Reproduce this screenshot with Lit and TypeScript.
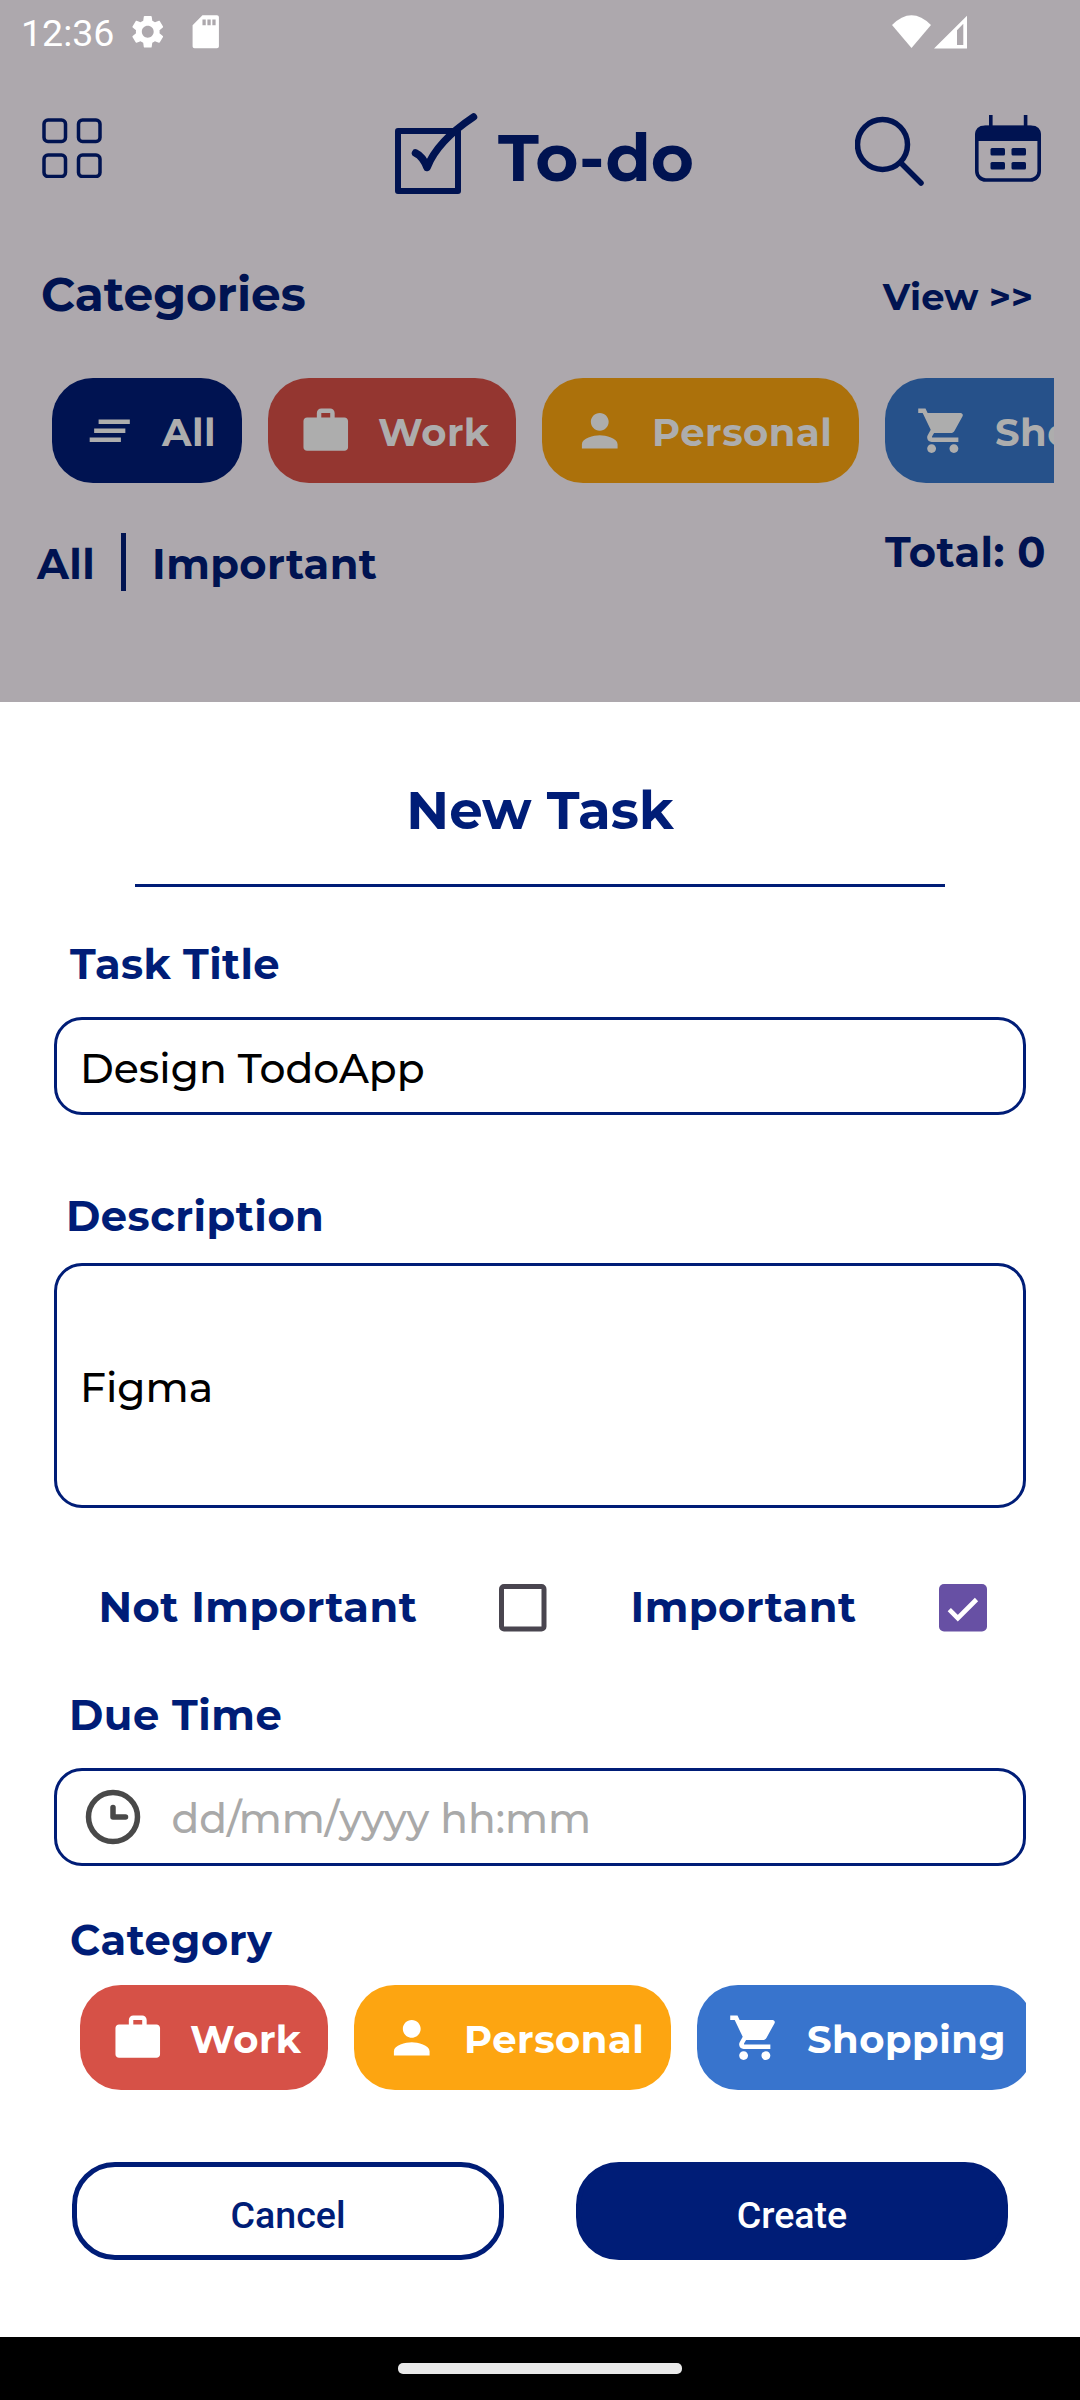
import { LitElement, html, css, svg, nothing } from "lit";
import { customElement, property, state } from "lit/decorators.js";
import { classMap } from "lit/directives/class-map.js";

type Category = "all" | "work" | "personal" | "shopping";

const NAMES: Record<Category, string> = {
  all: "All",
  work: "Work",
  personal: "Personal",
  shopping: "Shopping",
};

const GLYPHS: Record<Category, string> = {
  all: "M5 13h14v-2H5v2zm-2 4h14v-2H3v2zM7 7v2h14V7H7z",
  work: "M10 2h4c1.1 0 2 .9 2 2v2h4.4C21.300 6 22 6.700 22 7.600V19.400C22 20.300 21.300 21 20.400 21H3.600C2.700 21 2 20.300 2 19.400V7.600C2 6.700 2.700 6 3.600 6H8V4c0-1.100.9-2 2-2zm0 2v2h4V4z",
  personal:
    "M12 12c2.210 0 4-1.790 4-4s-1.790-4-4-4-4 1.790-4 4 1.790 4 4 4zm0 2c-2.670 0-8 1.340-8 4v2h16v-2c0-2.660-5.330-4-8-4z",
  shopping:
    "M7 18c-1.100 0-1.990.9-1.990 2S5.900 22 7 22s2-.9 2-2-.9-2-2-2zM1 2v2h2l3.600 7.590-1.350 2.450c-.160.280-.250.610-.250.960 0 1.100.9 2 2 2h12v-2H7.420c-.140 0-.250-.110-.250-.250l.030-.120.900-1.630h7.450c.750 0 1.410-.410 1.750-1.030l3.580-6.490c.080-.140.120-.310.120-.480 0-.550-.450-1-1-1H5.210l-.940-2H1zm16 16c-1.100 0-1.990.9-1.990 2s.890 2 1.990 2 2-.9 2-2-.9-2-2-2z",
};

@customElement("category-chip")
export class CategoryChip extends LitElement {
  @property() kind: Category = "all";
  @property({ type: Boolean }) dimmed = false;

  static styles = css`
    :host {
      display: block;
      flex: none;
    }
    .chip {
      display: flex;
      align-items: center;
      height: 105px;
      box-sizing: border-box;
      padding-left: 31px;
      border-radius: 41px;
      color: #fff;
      font: 700 38.5px/50px Montserrat, "Open Sans", sans-serif;
      letter-spacing: 0.5px;
      white-space: nowrap;
    }
    .glyph {
      width: 53.5px;
      height: 53.5px;
      flex: none;
      margin-right: 25.5px;
      fill: currentColor;
    }
    .name {
      padding-top: 4px;
    }
    .all {
      width: 190px;
      background: #001d77;
    }
    .work {
      width: 248px;
      background: #d65147;
    }
    .personal {
      width: 317px;
      background: #fda511;
    }
    .shopping {
      width: 336px;
      background: #3874cd;
    }
    .dimmed {
      color: #adadad;
    }
    .dimmed.all {
      background: #001351;
    }
    .dimmed.work {
      background: #943630;
    }
    .dimmed.personal {
      background: #ac710b;
    }
    .dimmed.shopping {
      background: #26518a;
    }
  `;

  render() {
    return html`
      <div class=${classMap({ chip: true, [this.kind]: true, dimmed: this.dimmed })}>
        <svg class="glyph" viewBox="0 0 24 24">
          <path fill-rule="evenodd" d=${GLYPHS[this.kind]}></path>
        </svg>
        <span class="name">${NAMES[this.kind]}</span>
      </div>
    `;
  }
}

@customElement("check-box")
export class CheckBox extends LitElement {
  @property({ type: Boolean }) checked = false;

  static styles = css`
    :host {
      display: block;
      flex: none;
    }
    .box {
      display: block;
      width: 48px;
      height: 48px;
    }
  `;

  render() {
    return html`
      <svg class="box" viewBox="0 0 48 48">
        ${this.checked
          ? svg`<rect x="0" y="0" width="48" height="47.5" rx="5" fill="#6750a4"></rect>
              <path d="M10.300 25.700L18.800 34.200L37.500 15.500" fill="none" stroke="#fff" stroke-width="4.6"></path>`
          : svg`<rect x="2.5" y="2.5" width="42.5" height="42.5" rx="2.5" fill="none" stroke="#49454f" stroke-width="5"></rect>`}
      </svg>
    `;
  }
}

@customElement("status-bar")
export class StatusBar extends LitElement {
  static styles = css`
    :host {
      display: flex;
      align-items: center;
      height: 63px;
      padding-left: 21px;
      color: #fff;
      font: 400 37.5px/44px Roboto, sans-serif;
    }
    svg {
      fill: currentColor;
      flex: none;
    }
    .time {
      width: 107px;
      padding-top: 3px;
    }
    .gear,
    .card {
      width: 39.5px;
      height: 39.5px;
    }
    .card {
      margin-left: 18.5px;
    }
    .signals {
      margin-left: auto;
      margin-right: 112px;
      width: 76px;
      height: 34px;
    }
  `;

  render() {
    return html`
      <span class="time">12:36</span>
      <svg class="gear" viewBox="0 0 24 24">
        <path
          d="M19.140 12.940c.040-.300.060-.610.060-.940 0-.320-.020-.640-.070-.940l2.030-1.580c.180-.140.230-.410.120-.610l-1.920-3.320c-.120-.220-.370-.290-.590-.220l-2.390.960c-.500-.380-1.030-.700-1.620-.940l-.360-2.540c-.040-.240-.240-.410-.480-.410h-3.840c-.240 0-.430.170-.470.410l-.360 2.540c-.590.240-1.130.570-1.620.940l-2.390-.960c-.220-.080-.470 0-.590.220L2.740 8.870c-.120.210-.080.470.120.610l2.030 1.580c-.050.300-.090.630-.090.940s.020.640.070.940l-2.030 1.580c-.180.140-.230.410-.120.610l1.920 3.320c.120.220.370.290.590.220l2.390-.960c.500.380 1.030.700 1.620.940l.360 2.540c.050.240.240.410.480.410h3.840c.240 0 .440-.170.470-.410l.360-2.540c.590-.240 1.130-.560 1.620-.940l2.390.960c.220.080.470 0 .590-.220l1.920-3.320c.120-.220.070-.470-.120-.610l-2.010-1.580zM12 15.600c-1.980 0-3.600-1.620-3.600-3.600s1.620-3.600 3.600-3.600 3.600 1.620 3.600 3.600-1.620 3.600-3.600 3.600z"
        ></path>
      </svg>
      <svg class="card" viewBox="0 0 24 24">
        <path
          fill-rule="evenodd"
          d="M18.800 2H10L4 8v12.800C4 21.500 4.500 22 5.200 22h13.600c.7 0 1.200-.5 1.200-1.200V3.200C20 2.500 19.500 2 18.800 2zM12 8h-2V4.500h2V8zm3 0h-2V4.500h2V8zm3 0h-2V4.500h2V8z"
        ></path>
      </svg>
      <svg class="signals" viewBox="0 0 76 34">
        <path d="M19.500 33L0 10Q19.500 -9.500 39 10Z"></path>
        <path fill-rule="evenodd" d="M42 33.500L75 .8V33.500ZM65 15.200V30H71.300V8.800Z"></path>
      </svg>
    `;
  }
}

@customElement("task-overview")
export class TaskOverview extends LitElement {
  static styles = css`
    :host {
      display: flex;
      flex-direction: column;
      height: 702px;
      overflow: hidden;
      background: #ada8ad;
      color: #001351;
      font: 700 41.6px/50px Montserrat, "Open Sans", sans-serif;
      white-space: nowrap;
    }
    svg {
      flex: none;
      fill: none;
      stroke: currentColor;
    }
    .header {
      display: flex;
      align-items: flex-start;
      height: 202px;
      padding: 50px 39px 0 42px;
      box-sizing: border-box;
    }
    .solid {
      fill: currentColor;
      stroke: none;
    }
    .grid {
      width: 60px;
      height: 60px;
      margin-top: 5px;
    }
    .logo {
      width: 83px;
      height: 83px;
      margin-left: 293px;
    }
    .title {
      margin: 12px auto 0 20px;
      font-size: 66px;
      line-height: 66px;
    }
    .search {
      width: 70px;
      height: 70px;
      margin-top: 3px;
    }
    .calendar {
      width: 66px;
      height: 68px;
      margin: 2px 0 0 50px;
    }
    .section {
      display: flex;
      justify-content: space-between;
      align-items: flex-start;
      height: 60px;
      padding: 0 47px 0 41px;
      line-height: 60px;
      font-size: 47px;
    }
    .view {
      padding-top: 2px;
      font-size: 36.8px;
    }
    .chips {
      display: flex;
      gap: 26px;
      margin: 53px 26px 0 52px;
      overflow: hidden;
    }
    .tabs {
      display: flex;
      align-items: flex-start;
      height: 70px;
      margin-top: 44px;
      padding: 0 34px 0 37px;
      letter-spacing: 0.4px;
    }
    .tab {
      margin-top: 12px;
    }
    .divider {
      width: 5px;
      height: 58px;
      margin: 6px 26px 0 26px;
      background: currentColor;
    }
    .total {
      margin-left: auto;
      letter-spacing: 0.5px;
    }
  `;

  render() {
    return html`
      <status-bar></status-bar>
      <div class="header">
        <svg class="grid" viewBox="0 0 60 60" stroke-width="3.5">
          ${[
            [2, 2],
            [36.5, 2],
            [2, 37],
            [36.5, 37],
          ].map(([x, y]) => svg`<rect x=${x} y=${y} width="21.5" height="21.5" rx="4"></rect>`)}
        </svg>
        <svg class="logo" viewBox="0 0 83 83" stroke-width="6">
          <rect x="3" y="18" width="60" height="60" stroke-linejoin="round"></rect>
          <path
            d="M20.500 40Q28 43.500 32 54.500Q42.500 28 78.500 4"
            stroke-width="7.500"
            stroke-linecap="round"
            stroke-linejoin="round"
          ></path>
        </svg>
        <span class="title">To-do</span>
        <svg class="search" viewBox="0 0 70 70" stroke-width="5.5">
          <circle cx="27.5" cy="28.5" r="25"></circle>
          <path d="M46.500 47.500L66 67" stroke-linecap="round"></path>
        </svg>
        <svg class="calendar" viewBox="0 0 66 68">
          <rect x="1.8" y="12.5" width="62.4" height="52.5" rx="9" stroke-width="3.6"></rect>
          <path
            class="solid"
            d="M0 26V20Q0 10.500 10 10.500H56Q66 10.500 66 20V26ZM14 0h3.600v12H14zM48.800 0h3.600v12h-3.600z"
          ></path>
          <g class="solid">
            <rect x="15.5" y="33" width="14.5" height="7.5" rx="1.5"></rect>
            <rect x="36.5" y="33" width="14.5" height="7.5" rx="1.5"></rect>
            <rect x="15.5" y="47" width="14.5" height="7.5" rx="1.5"></rect>
            <rect x="36.5" y="47" width="14.5" height="7.5" rx="1.5"></rect>
          </g>
        </svg>
      </div>
      <div class="section">
        <span>Categories</span>
        <span class="view">View &gt;&gt;</span>
      </div>
      <div class="chips">
        ${(["all", "work", "personal", "shopping"] as Category[]).map(
          (kind) => html`<category-chip .kind=${kind} dimmed></category-chip>`,
        )}
      </div>
      <div class="tabs">
        <span class="tab">All</span>
        <span class="divider"></span>
        <span class="tab">Important</span>
        <span class="total">Total: 0</span>
      </div>
    `;
  }
}

@customElement("task-field")
export class TaskField extends LitElement {
  @property() value = "";
  @property() placeholder = "";
  @property({ type: Boolean }) tall = false;
  @property({ type: Boolean }) clock = false;

  static styles = css`
    :host {
      display: block;
      margin: 0 54px;
    }
    .field {
      display: flex;
      align-items: center;
      height: 98px;
      box-sizing: border-box;
      border: 3px solid #001d77;
      border-radius: 28px;
      padding: 3px 24px 0 23px;
      color: #000;
      font: 500 40.9px/50px Montserrat, "Open Sans", sans-serif;
    }
    .tall {
      height: 245px;
    }
    .clock {
      width: 56px;
      height: 56px;
      margin: -3px 31px 0 4.5px;
      fill: none;
      stroke: #494949;
      stroke-width: 5.5;
      stroke-linecap: round;
      stroke-linejoin: round;
    }
    .hint {
      color: #a9a9a9;
      font-size: 40.75px;
    }
  `;

  render() {
    return html`
      <div class=${classMap({ field: true, tall: this.tall })}>
        ${this.clock
          ? html`<svg class="clock" viewBox="0 0 56 56">
              <circle cx="28" cy="28" r="24.5"></circle>
              <path d="M28 18.500V28H40.500"></path>
            </svg>`
          : nothing}
        ${this.value
          ? html`<span>${this.value}</span>`
          : html`<span class="hint">${this.placeholder}</span>`}
      </div>
    `;
  }
}

@customElement("new-task-sheet")
export class NewTaskSheet extends LitElement {
  @state() private important = true;

  static styles = css`
    :host {
      display: flex;
      flex-direction: column;
      height: 1635px;
      background: #fff;
      color: #001d77;
      font: 700 41.6px/50px Montserrat, "Open Sans", sans-serif;
      white-space: nowrap;
    }
    .heading {
      margin: 78px 0 0;
      text-align: center;
      font-size: 53px;
      line-height: 60px;
    }
    .rule {
      height: 3px;
      margin: 44px 135px 0;
      background: currentColor;
    }
    .label {
      letter-spacing: 0.35px;
      padding-left: 70px;
      margin: 52px 0 28px;
    }
    .label-description {
      letter-spacing: 0.5px;
      padding-left: 66px;
      margin: 76px 0 22px;
    }
    .label-due {
      letter-spacing: 0.5px;
      padding-left: 69px;
      margin: 58px 0 28px;
    }
    .label-category {
      letter-spacing: 0.5px;
      padding-left: 70px;
      margin: 49px 0 20px;
    }
    .options {
      display: grid;
      grid-template-columns: 400.5px 131.5px 308.5px 48px;
      align-items: center;
      height: 50px;
      margin-top: 74px;
      padding-left: 98.5px;
      letter-spacing: 0.5px;
    }
    .options check-box {
      padding-top: 2px;
    }
    .chips {
      display: flex;
      gap: 26px;
      margin: 0 54px;
      padding-left: 26px;
      overflow: hidden;
    }
    .actions {
      display: flex;
      gap: 72px;
      margin: 72px 72px 0;
    }
    .button {
      flex: 1;
      height: 98px;
      box-sizing: border-box;
      border: 5px solid #001d77;
      border-radius: 43px;
      padding: 7px 0 0;
      background: #fff;
      color: #001d77;
      font: 500 37.6px/44px Roboto, sans-serif;
    }
    .primary {
      background: #001d77;
      color: #fff;
    }
  `;

  render() {
    return html`
      <h1 class="heading">New Task</h1>
      <div class="rule"></div>
      <div class="label">Task Title</div>
      <task-field value="Design TodoApp"></task-field>
      <div class="label label-description">Description</div>
      <task-field value="Figma" tall></task-field>
      <div class="options">
        <span>Not Important</span>
        <check-box .checked=${!this.important} @click=${() => (this.important = false)}></check-box>
        <span>Important</span>
        <check-box .checked=${this.important} @click=${() => (this.important = true)}></check-box>
      </div>
      <div class="label label-due">Due Time</div>
      <task-field placeholder="dd/mm/yyyy hh:mm" clock></task-field>
      <div class="label label-category">Category</div>
      <div class="chips">
        ${(["work", "personal", "shopping"] as Category[]).map(
          (kind) => html`<category-chip .kind=${kind}></category-chip>`,
        )}
      </div>
      <div class="actions">
        <button class="button">Cancel</button>
        <button class="button primary">Create</button>
      </div>
    `;
  }
}

@customElement("app-root")
export class AppRoot extends LitElement {
  static styles = css`
    :host {
      display: flex;
      flex-direction: column;
      width: 1080px;
      height: 2400px;
      overflow: hidden;
      background: #000;
    }
    .navigation {
      display: flex;
      justify-content: center;
      padding-top: 26px;
    }
    .handle {
      width: 284px;
      height: 11px;
      border-radius: 5px;
      background: #e9e9e9;
    }
  `;

  render() {
    return html`
      <task-overview></task-overview>
      <new-task-sheet></new-task-sheet>
      <div class="navigation"><div class="handle"></div></div>
    `;
  }
}
